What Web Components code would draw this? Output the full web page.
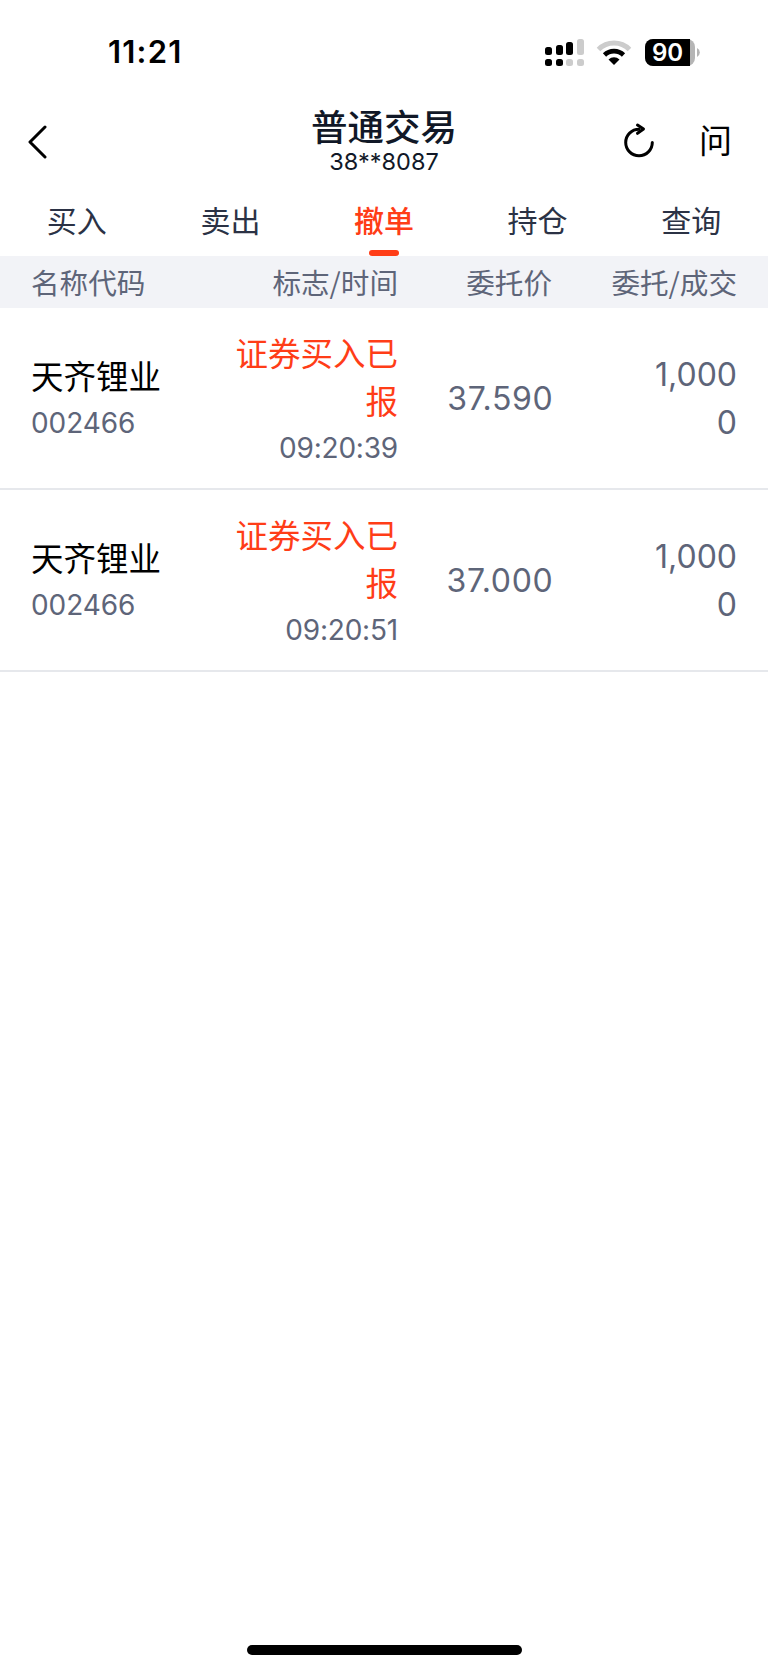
<!DOCTYPE html>
<html lang="zh-CN">
<head>
<meta charset="utf-8">
<title>普通交易</title>
<style>
  html, body { margin: 0; padding: 0; background: #fff; }
  body { font-family: Inter, "Noto Sans CJK SC", sans-serif; }
</style>
</head>
<body>
<trade-page>
  <status-bar slot="top" time="11:21" battery="90"></status-bar>
  <nav-bar slot="top" account="38**8087">普通交易</nav-bar>
  <tab-bar slot="top" active="2">
    <span>买入</span><span>卖出</span><span>撤单</span><span>持仓</span><span>查询</span>
  </tab-bar>
  <table-head slot="top"></table-head>
  <order-row name="天齐锂业" code="002466" flag="证券买入已报" time="09:20:39" price="37.590" qty="1,000" done="0"></order-row>
  <order-row name="天齐锂业" code="002466" flag="证券买入已报" time="09:20:51" price="37.000" qty="1,000" done="0"></order-row>
</trade-page>

<script>
class TradePage extends HTMLElement {
  constructor() {
    super();
    this.attachShadow({mode: 'open'}).innerHTML = `
      <style>
        :host { display: flex; flex-direction: column; width: 768px; height: 1665px; overflow: hidden; background: #fff; }
        main { flex: 1; }
        .home { display: flex; justify-content: center; padding-bottom: 10px; }
        .home i { display: block; width: 275px; height: 10px; border-radius: 5px; background: #000; }
      </style>
      <slot name="top"></slot>
      <main><slot></slot></main>
      <div class="home"><i></i></div>
    `;
  }
}

class StatusBar extends HTMLElement {
  constructor() {
    super();
    this.attachShadow({mode: 'open'}).innerHTML = `
      <style>
        :host { display: flex; align-items: center; justify-content: space-between; height: 104px; box-sizing: border-box; padding: 0 67px 0 108px; font-family: Inter, sans-serif; }
        .time { font-size: 31px; font-weight: 600; color: #000; line-height: 104px; letter-spacing: 1.2px; }
        .icons { display: flex; align-items: center; }
        svg { display: block; }
        .battery { position: relative; width: 56px; height: 27px; margin-left: 13px; }
        .battery span { position: absolute; left: 0; top: 0; width: 45px; height: 27px; line-height: 27px; text-align: center; color: #fff; font-size: 24px; font-weight: 600; }
      </style>
      <span class="time">${this.getAttribute('time')}</span>
      <div class="icons">
        <svg width="39" height="27" viewBox="0 0 39 27">
          <rect x="0" y="8" width="7" height="8" rx="2.5" fill="#000"/>
          <rect x="11" y="6" width="7" height="10" rx="2.5" fill="#000"/>
          <rect x="21" y="3" width="7" height="13" rx="2.5" fill="#000"/>
          <rect x="32" y="0" width="7" height="16" rx="2.5" fill="#ccc"/>
          <rect x="0" y="20" width="7" height="7" rx="2.5" fill="#000"/>
          <rect x="11" y="20" width="7" height="7" rx="2.5" fill="#000"/>
          <rect x="21" y="20" width="7" height="7" rx="2.5" fill="#ccc"/>
          <rect x="32" y="20" width="7" height="7" rx="2.5" fill="#ccc"/>
        </svg>
        <svg width="36" height="27" viewBox="0 0 36 27" style="margin-left:12px">
          <path d="M2.5 10.5 A22 22 0 0 1 33.5 10.5" fill="none" stroke="#ccc" stroke-width="5"/>
          <path d="M8.5 16 A13.5 13.5 0 0 1 27.5 16" fill="none" stroke="#000" stroke-width="4.6"/>
          <path d="M12.5 20.5 A8 8 0 0 1 23.5 20.5 L18 26 Z" fill="#000"/>
        </svg>
        <div class="battery">
          <svg width="56" height="27" viewBox="0 0 56 27">
            <rect x="0" y="0" width="50" height="27" rx="8" fill="#b5b5b5"/>
            <path d="M8 0 H45 V27 H8 A8 8 0 0 1 0 19 V8 A8 8 0 0 1 8 0 Z" fill="#000"/>
            <path d="M52 9 A5 5 0 0 1 52 18 Z" fill="#b5b5b5"/>
          </svg>
          <span>${this.getAttribute('battery')}</span>
        </div>
      </div>
    `;
  }
}

class NavBar extends HTMLElement {
  constructor() {
    super();
    this.attachShadow({mode: 'open'}).innerHTML = `
      <style>
        :host { display: grid; grid-template-columns: 1fr auto 1fr; align-items: start; height: 86px; padding: 0 36px 0 28px; color: #000; }
        .back { display: block; margin-top: 21px; }
        .mid { text-align: center; margin-left: 8px; }
        .title { font: 500 36.5px/40px "Noto Sans CJK SC", sans-serif; color: #111827; margin-top: 2px; }
        .acct { font: 400 23.5px/24px Inter, sans-serif; color: #111827; margin-top: 4px; }
        .right { display: flex; justify-content: flex-end; align-items: flex-start; gap: 45px; margin-top: 21px; }
        .right svg { display: block; overflow: visible; }
        .ask { font: 400 33px/34px "Noto Sans CJK SC", sans-serif; color: #000; margin-top: -3px; }
      </style>
      <svg class="back" width="19" height="34" viewBox="0 0 19 34"><path d="M17 2 L2 17 L17 32" fill="none" stroke="#000" stroke-width="3" stroke-linecap="round" stroke-linejoin="round"/></svg>
      <div class="mid"><div class="title"><slot></slot></div><div class="acct">${this.getAttribute('account')}</div></div>
      <div class="right">
        <svg width="30" height="34" viewBox="0 0 30 34"><path d="M15 4.2 A13.3 13.3 0 1 0 28.3 17.5" fill="none" stroke="#000" stroke-width="3" stroke-linecap="round"/><path d="M13.5 0 L19.5 4 L13.5 8.3" fill="none" stroke="#000" stroke-width="3" stroke-linecap="round" stroke-linejoin="round"/></svg>
        <span class="ask">问</span>
      </div>
    `;
  }
}

class TabBar extends HTMLElement {
  constructor() {
    super();
    this.attachShadow({mode: 'open'}).innerHTML = `
      <style>
        :host { display: flex; height: 66px; position: relative; font: 400 30px/58px "Noto Sans CJK SC", sans-serif; color: #2b3245; text-align: center; }
        ::slotted(span) { flex: 1; }
        ::slotted(.on) { color: #ff3d17; font-weight: 500; }
        .bar { position: absolute; bottom: 0; width: 30px; height: 6px; border-radius: 3px; background: #ff3d17; }
      </style>
      <slot></slot>
      <i class="bar"></i>
    `;
    const active = Number(this.getAttribute('active'));
    this.children[active].classList.add('on');
    this.shadowRoot.querySelector('.bar').style.left = (768 / 5 * (active + 0.5) - 15) + 'px';
  }
}

class TableHead extends HTMLElement {
  constructor() {
    super();
    this.attachShadow({mode: 'open'}).innerHTML = `
      <style>
        :host { display: grid; grid-template-columns: 190px 177px 154px 185px; height: 52px; padding-left: 31px; box-sizing: border-box; background: #f2f3f7; font: 400 28.6px/52px "Noto Sans CJK SC", sans-serif; color: #5e6579; }
        span { white-space: nowrap; }
        .r { text-align: right; }
      </style>
      <span>名称代码</span>
      <span class="r">标志/时间</span>
      <span class="r">委托价</span>
      <span class="r">委托/成交</span>
    `;
  }
}

class OrderRow extends HTMLElement {
  constructor() {
    super();
    const a = n => this.getAttribute(n);
    this.attachShadow({mode: 'open'}).innerHTML = `
      <style>
        :host { display: grid; grid-template-columns: 190px 177px 154px 185px; align-items: center; box-sizing: border-box; height: 182px; padding-left: 31px; border-bottom: 2px solid #e6e8ec; font-family: Inter, "Noto Sans CJK SC", sans-serif; color: #5e6579; }
        .name { font: 400 32.5px/44px "Noto Sans CJK SC", sans-serif; color: #000; }
        .code, .time { font-size: 28px; line-height: 42px; }
        .code { margin-top: 5px; letter-spacing: -.1px; }
        .time { letter-spacing: -.2px; }
        .flag-col, .qty, .price { text-align: right; }
        .flag { font: 400 32.5px/48px "Noto Sans CJK SC", sans-serif; color: #ff3d17; margin-bottom: 3px; }
        .price, .qty { font-size: 32px; line-height: 48px; padding-top: 2px; }
        .price { letter-spacing: .7px; margin-right: -1.5px; }
      </style>
      <div><div class="name">${a('name')}</div><div class="code">${a('code')}</div></div>
      <div class="flag-col"><div class="flag">${a('flag')}</div><div class="time">${a('time')}</div></div>
      <div class="price">${a('price')}</div>
      <div class="qty">${a('qty')}<br>${a('done')}</div>
    `;
  }
}

customElements.define('trade-page', TradePage);
customElements.define('status-bar', StatusBar);
customElements.define('nav-bar', NavBar);
customElements.define('tab-bar', TabBar);
customElements.define('table-head', TableHead);
customElements.define('order-row', OrderRow);
</script>
</body>
</html>
